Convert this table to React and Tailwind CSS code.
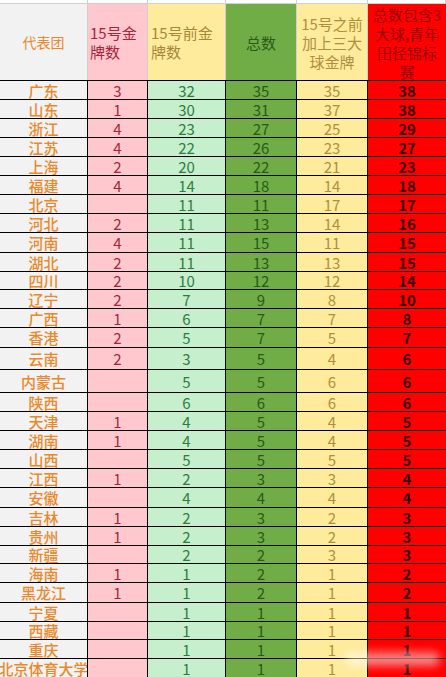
import React from "react";

const rows = [
  ["广东", "3", "32", "35", "35", "38", "h-[19px]"],
  ["山东", "1", "30", "31", "37", "38", "h-[19px]"],
  ["浙江", "4", "23", "27", "25", "29", "h-[19px]"],
  ["江苏", "4", "22", "26", "23", "27", "h-[19px]"],
  ["上海", "2", "20", "22", "21", "23", "h-[19px]"],
  ["福建", "4", "14", "18", "14", "18", "h-[19px]"],
  ["北京", "", "11", "11", "17", "17", "h-[19px]"],
  ["河北", "2", "11", "13", "14", "16", "h-[19px]"],
  ["河南", "4", "11", "15", "11", "15", "h-[20px]"],
  ["湖北", "2", "11", "13", "13", "15", "h-[19px]"],
  ["四川", "2", "10", "12", "12", "14", "h-[18px]"],
  ["辽宁", "2", "7", "9", "8", "10", "h-[19px]"],
  ["广西", "1", "6", "7", "7", "8", "h-[19px]"],
  ["香港", "2", "5", "7", "5", "7", "h-[20px]"],
  ["云南", "2", "3", "5", "4", "6", "h-[22px]"],
  ["内蒙古", "", "5", "5", "6", "6", "h-[23px]"],
  ["陕西", "", "6", "6", "6", "6", "h-[19px]"],
  ["天津", "1", "4", "5", "4", "5", "h-[19px]"],
  ["湖南", "1", "4", "5", "4", "5", "h-[19px]"],
  ["山西", "", "5", "5", "5", "5", "h-[19px]"],
  ["江西", "1", "2", "3", "3", "4", "h-[19px]"],
  ["安徽", "", "4", "4", "4", "4", "h-[20px]"],
  ["吉林", "1", "2", "3", "2", "3", "h-[19px]"],
  ["贵州", "1", "2", "3", "2", "3", "h-[19px]"],
  ["新疆", "", "2", "2", "3", "3", "h-[18px]"],
  ["海南", "1", "1", "2", "1", "2", "h-[19px]"],
  ["黑龙江", "1", "1", "2", "1", "2", "h-[20px]"],
  ["宁夏", "", "1", "1", "1", "1", "h-[19px]"],
  ["西藏", "", "1", "1", "1", "1", "h-[18px]"],
  ["重庆", "", "1", "1", "1", "1", "h-[19px]"],
  ["北京体育大学", "", "1", "1", "1", "1", "h-[19px]"],
];

const grid = "grid grid-cols-[88px_60px_78px_71px_71px_78px]";
const cell = "flex items-center justify-center leading-[15px]";

export default function App() {
  return (
    <div className="relative w-[446px] h-[677px] overflow-hidden bg-white font-['Noto_Sans_CJK_SC','Liberation_Sans',sans-serif] text-[15px] leading-none">
      {/* top strip of previous row */}
      <div className={`${grid} h-[3px] bg-white`}>
        <div className="border-r border-[#d0d0d0]" />
        <div className="border-r border-[#d0d0d0]" />
        <div className="border-r border-[#d0d0d0]" />
        <div className="border-r border-[#d0d0d0]" />
        <div className="border-r border-[#d0d0d0]" />
        <div className="border-r border-[#d0d0d0]" />
      </div>
      {/* header */}
      <div className={`${grid} h-[78px] border-t border-[#d0d0d0] border-b border-b-black`}>
        <div className="bg-[#f2f2f2] border-r border-[#d0d0d0] flex items-center justify-center text-[14px] text-[#e8892c]">
          代表团
        </div>
        <div className="bg-[#ffc7ce] border-r border-[#d0d0d0] flex items-center pl-[2px] text-[#a3263a] leading-[19px]">
          <div>
            15号金
            <br />
            牌数
          </div>
        </div>
        <div className="bg-[#ffeb9c] border-r border-[#d0d0d0] flex items-center pl-[3px] text-[#a8873a] leading-[19px]">
          <div>
            15号前金
            <br />
            牌数
          </div>
        </div>
        <div className="bg-[#70ad47] border-r border-[#d0d0d0] flex items-center justify-center text-[#2c5a1a]">
          总数
        </div>
        <div className="bg-[#ffeb9c] border-r border-[#d0d0d0] flex items-center justify-center text-center text-[#b08f3c] leading-[19px]">
          <div>
            15号之前
            <br />
            加上三大
            <br />
            球金牌
          </div>
        </div>
        <div className="bg-[#ff0000] flex items-start justify-center text-center text-[#9a0000] leading-[19px] overflow-hidden whitespace-nowrap">
          <div className="pt-[1px]">
            总数包含3
            <br />
            大球,青年
            <br />
            田径锦标
            <br />
            赛
          </div>
        </div>
      </div>
      {/* rows */}
      {rows.map((r, i) => (
        <div key={i} className={`${grid} ${r[6]} border-b border-black`}>
          <div className={`${cell} bg-[#f2f2f2] border-r border-black overflow-hidden whitespace-nowrap text-[#e8892c] font-medium`}>
            {r[0]}
          </div>
          <div className={`${cell} bg-[#ffc7ce] border-r border-black text-[#9c2b36]`}>
            {r[1]}
          </div>
          <div className={`${cell} bg-[#c6efce] border-r border-black text-[#2f7d3b]`}>
            {r[2]}
          </div>
          <div className={`${cell} bg-[#70ad47] border-r border-black text-[#2a5a18]`}>
            {r[3]}
          </div>
          <div className={`${cell} bg-[#ffeb9c] border-r border-black text-[#b08f3c]`}>
            {r[4]}
          </div>
          <div className={`${cell} bg-[#ff0000] text-[#3a0000] font-bold`}>
            {r[5]}
          </div>
        </div>
      ))}
      {/* faint watermark smear */}
      <div className="absolute left-[345px] top-[652px] w-[95px] h-[14px] bg-white/50 blur-[4px] rounded-full" />
    </div>
  );
}
